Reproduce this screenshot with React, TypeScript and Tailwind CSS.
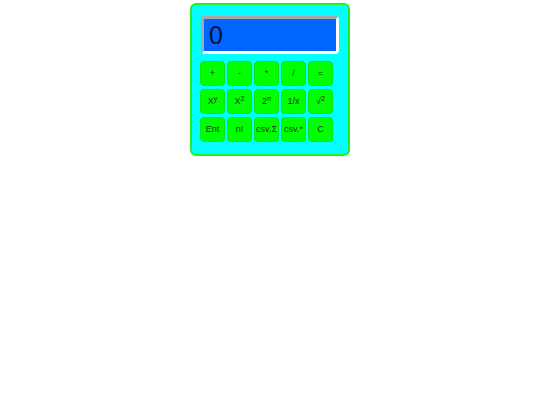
import React from "react";

const rows: React.ReactNode[][] = [
  ["+", "-", "*", "/", "="],
  [
    <span key="a">X<sup className="text-[7px]">y</sup></span>,
    <span key="b">X<sup className="text-[7px]">2</sup></span>,
    <span key="c">2<sup className="text-[7px]">n</sup></span>,
    "1/x",
    <span key="d">√<sup className="text-[7px]">2</sup></span>,
  ],
  ["Ent", "n!", "csv.Σ", "csv.*", "C"],
];

export default function App() {
  return (
    <div className="w-[540px] h-[405px] bg-white" style={{ fontFamily: '"Liberation Sans", Arial, sans-serif' }}>
      <div className="mx-auto mt-[3px] w-[160px] h-[153px] rounded-[6px] border-2 border-[#22ee22] bg-[#00ffff] pt-[11px] pl-[9px]">
        <div className="w-[138px] h-[38px] rounded-[4px] border-[3px] border-t-[#a8a8a8] border-l-[#a8a8a8] border-r-white border-b-white bg-[#0066ff] flex items-center pl-[5px]">
          <span className="text-[25px] leading-none text-[#00113a]">0</span>
        </div>
        <div className="mt-[7px] ml-[-1px] grid grid-cols-[repeat(5,25px)] gap-x-[2px] gap-y-[3px]">
          {rows.flat().map((label, i) => (
            <button
              key={i}
              className="w-[25px] h-[25px] rounded-[4px] border border-[#11e011] bg-[#00ff00] text-[9px] leading-none text-[#1c2e1c] flex items-center justify-center whitespace-nowrap p-0"
            >
              {label}
            </button>
          ))}
        </div>
      </div>
    </div>
  );
}
